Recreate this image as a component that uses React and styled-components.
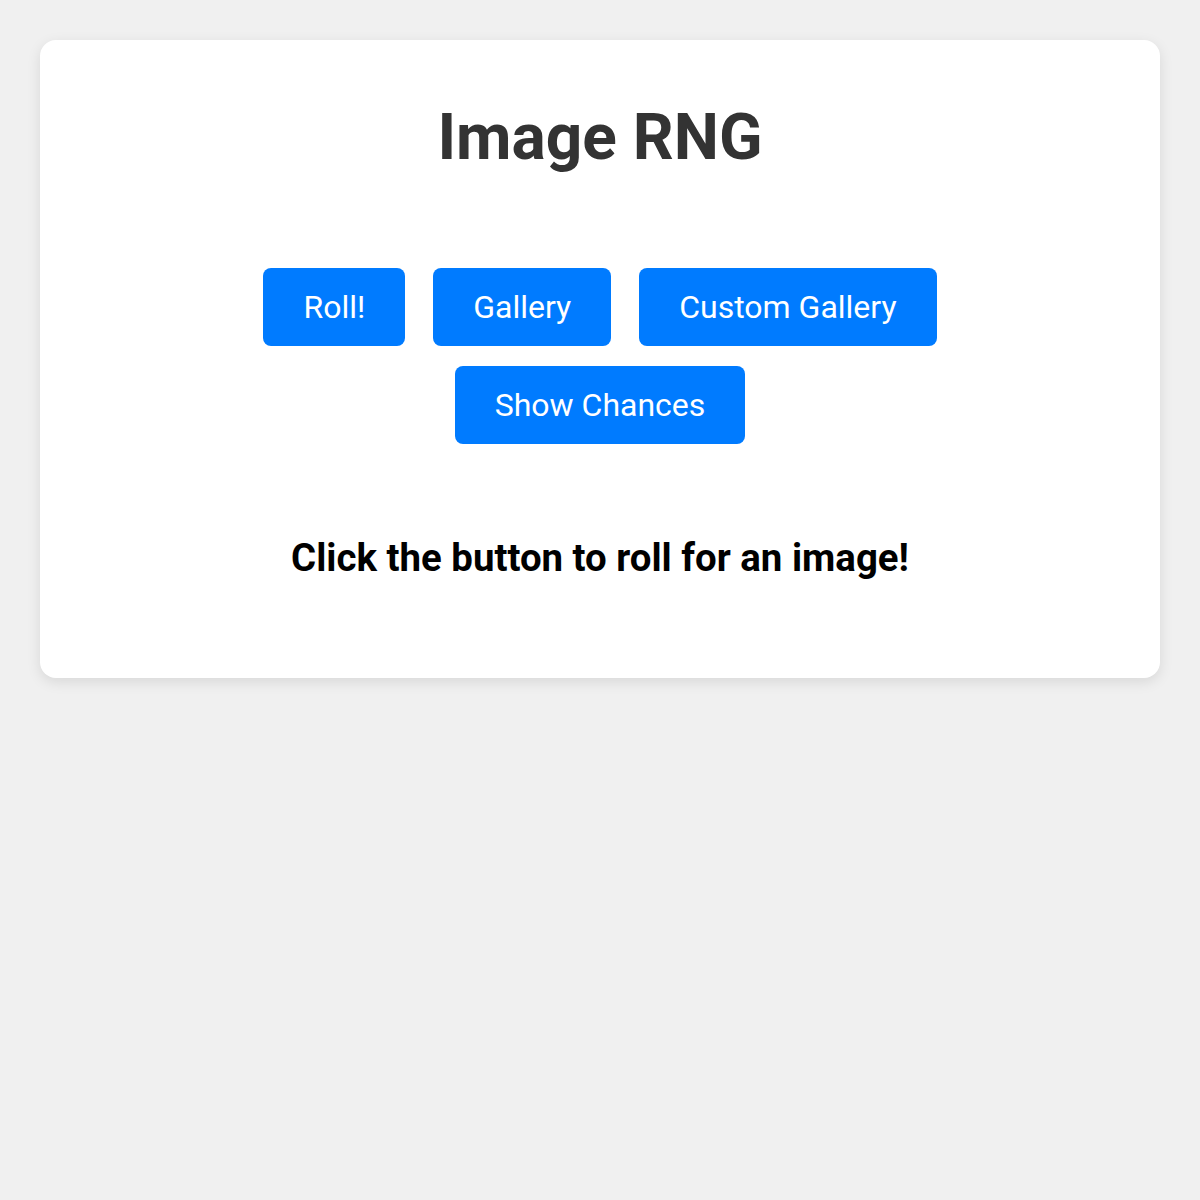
import React from 'react'
import styled, { createGlobalStyle } from 'styled-components'

const GlobalStyle = createGlobalStyle`
  html, body {
    margin: 0;
    padding: 0;
    background: #f0f0f0;
    font-family: Roboto, "Liberation Sans", Arial, sans-serif;
  }
`

const Page = styled.div`
  padding: 40px;
`

const Card = styled.main`
  background: #fff;
  border-radius: 16px;
  box-shadow: 0 4px 14px rgba(0, 0, 0, 0.1);
  padding: 60px 40px 98px;
  display: flex;
  flex-direction: column;
  align-items: center;
`

const Title = styled.h1`
  margin: 0 0 93px;
  font-size: 64px;
  font-weight: 700;
  color: #333;
`

const Buttons = styled.div`
  display: flex;
  flex-wrap: wrap;
  justify-content: center;
  column-gap: 28px;
  row-gap: 20px;
  max-width: 760px;
`

const Button = styled.button`
  background: #007bff;
  color: #fff;
  border: none;
  border-radius: 8px;
  padding: 20px 40px;
  font-family: inherit;
  font-size: 32px;
  line-height: 38px;
  cursor: pointer;
`

const Message = styled.p`
  margin: 91px 0 0;
  font-size: 38.4px;
  font-weight: 700;
  color: #000;
`

export default function App() {
  return (
    <>
      <GlobalStyle />
      <Page>
        <Card>
          <Title>Image RNG</Title>
          <Buttons>
            <Button>Roll!</Button>
            <Button>Gallery</Button>
            <Button>Custom Gallery</Button>
            <Button>Show Chances</Button>
          </Buttons>
          <Message>Click the button to roll for an image!</Message>
        </Card>
      </Page>
    </>
  )
}
